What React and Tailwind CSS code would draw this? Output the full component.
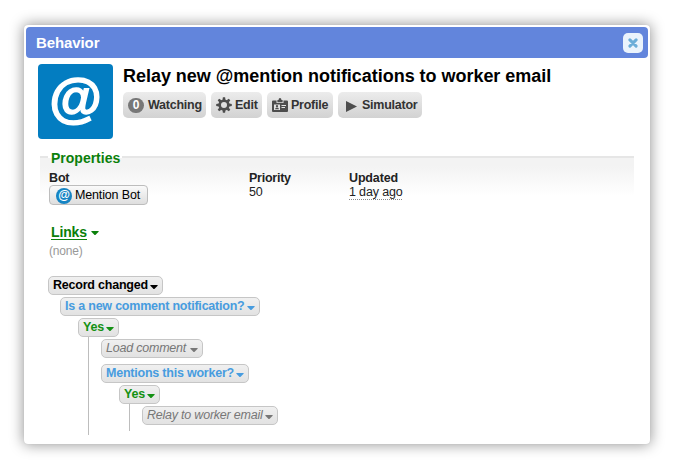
import React from "react";

function AtSign({ className, glyph = "" }) {
  return (
    <span className={`flex items-center justify-center text-white ${className}`}>
      <span className={glyph}>@</span>
    </span>
  );
}

function Caret() {
  return (
    <svg className="mt-[2px] h-[4px] w-[8px] shrink-0" viewBox="0 0 8 4" fill="currentColor">
      <path d="M0.4 0H7.6V0.7L4.4 4H3.6L0.4 0.7Z" />
    </svg>
  );
}

function GearIcon() {
  return (
    <svg className="h-4 w-4" viewBox="0 0 16 16">
      <g fill="#4d4d4d">
        {[0, 45, 90, 135, 180, 225, 270, 315].map((a) => (
          <path key={a} d="M6.9 0.2H9.1L9.7 4H6.3Z" transform={`rotate(${a} 8 8)`} />
        ))}
      </g>
      <circle cx="8" cy="8" r="4.3" fill="none" stroke="#4d4d4d" strokeWidth="2.6" />
    </svg>
  );
}

function BadgeIcon() {
  return (
    <svg className="h-[14px] w-4" viewBox="0 0 16 14">
      <path d="M1 2.5H4.5V5H11.5V2.5H15Q16 2.5 16 3.5V13Q16 14 15 14H1Q0 14 0 13V3.5Q0 2.5 1 2.5Z" fill="#4d4d4d" />
      <path d="M5.4 4.2V2H6.5Q6.7 0 8 0Q9.3 0 9.5 2H10.6V4.2Z" fill="#4d4d4d" />
      <path d="M2 6.5H8V12H2Z M9.5 7H14V8H9.5Z M9.5 9H13V10H9.5Z" fill="#e2e2e2" />
      <circle cx="5" cy="8.2" r="1.1" fill="#4d4d4d" />
      <path d="M3 11.3Q3.2 9.5 5 9.5Q6.8 9.5 7 11.3Z" fill="#4d4d4d" />
    </svg>
  );
}

function ToolButton({ icon, label, className }) {
  return (
    <div className={`flex h-[26px] items-center rounded-[5px] bg-gradient-to-b from-[#ececec] to-[#d2d2d2] text-[12.5px] leading-[26px] font-bold tracking-[-0.25px] text-[#333] ${className}`}>
      <span className="flex shrink-0">{icon}</span>
      <span className="whitespace-nowrap">{label}</span>
    </div>
  );
}

function Node({ label, className }) {
  return (
    <div className={`flex h-[19px] items-center justify-between rounded-[5px] border border-[#c6c6c6] bg-gradient-to-b from-[#f0f0f0] to-[#e2e2e2] pr-[4px] pl-[4px] text-[12.5px] leading-[17px] tracking-[-0.22px] whitespace-nowrap ${className}`}>
      <span>{label}</span>
      <Caret />
    </div>
  );
}

export default function App() {
  return (
    <div className="h-[471px] w-[676px] overflow-hidden bg-white px-[24px] pt-[25px] font-['Liberation_Sans',Arial,sans-serif] text-[12.5px] tracking-[-0.15px] text-[#222]">
      <div className="h-[419px] w-[626px] rounded-[4px] bg-white px-[2px] pt-[2px] shadow-[0_0_1px_0_#bbb,0_0_14px_1px_#9a9a9a]">
        <header className="flex h-[31px] items-center justify-between rounded-[4px] bg-[#6285dc] pr-[5px] pl-[10px]">
          <h1 className="pt-[2px] text-[15px] font-bold tracking-[-0.1px] text-white">Behavior</h1>
          <button className="flex h-5 w-5 items-center justify-center rounded-[5px] bg-[#eaf3fc]">
            <svg className="mt-px h-[10px] w-[10px]" viewBox="0 0 10 10">
              <path d="M1.9 1.9L8.1 8.1M8.1 1.9L1.9 8.1" stroke="#6badd8" strokeWidth="3" strokeLinecap="round" />
            </svg>
          </button>
        </header>

        <section className="flex pt-[6px] pl-[12px]">
          <AtSign className="h-[75px] w-[75px] rounded-[4px] bg-[#037dc1] pb-[9px] text-[54px] leading-none font-bold" glyph="[-webkit-text-stroke:1.4px_white]" />
          <div className="pl-[10px]">
            <h2 className="h-[28px] pt-px text-[18px] leading-[22px] font-bold tracking-[-0.03px] whitespace-nowrap text-black">
              Relay new @mention notifications to worker email
            </h2>
            <div className="flex gap-[5px]">
              <ToolButton
                className="w-[83px] gap-[4px] pl-[5px]"
                icon={<span className="flex h-[15px] w-4 items-center justify-center rounded-full bg-[#777] text-[12px] leading-none text-white">0</span>}
                label="Watching"
              />
              <ToolButton className="w-[51px] gap-[3px] pl-[5px]" icon={<GearIcon />} label="Edit" />
              <ToolButton className="w-[66px] gap-[3px] pl-[5px]" icon={<BadgeIcon />} label="Profile" />
              <ToolButton
                className="w-[84px] gap-[5px] pl-[8px]"
                icon={<svg className="mt-[2px] h-[11px] w-[11px]" viewBox="0 0 11 11"><path d="M0 0L11 5.5L0 11Z" fill="#4d4d4d" /></svg>}
                label="Simulator"
              />
            </div>
          </div>
        </section>

        <section className="mt-[11px] ml-[14px] h-[68px] w-[594px]">
          <div className="flex h-[16px] items-start">
            <div className="h-[16px] w-[8px] pt-[6px]"><div className="h-[10px] border-t-2 border-[#e6e6e6] bg-[#f3f3f3]" /></div>
            <h3 className="h-[16px] w-[74px] bg-gradient-to-b from-white from-50% to-[#f3f3f3] to-50% pl-[3px] text-[14px] leading-[16px] font-bold tracking-[0px] whitespace-nowrap text-[#0b800b]">Properties</h3>
            <div className="h-[16px] flex-1 pt-[6px]"><div className="h-[10px] border-t-2 border-[#e6e6e6] bg-[#f3f3f3]" /></div>
          </div>
          <div className="flex bg-gradient-to-b from-[#f3f3f3] to-white to-[30px] pt-[5px] pl-[9px] leading-[14px]">
            <div className="w-[200px]">
              <div className="font-bold">Bot</div>
              <div className="flex h-5 w-[99px] items-center gap-[3px] rounded-[4px] border border-[#bdbdbd] bg-gradient-to-b from-[#fafafa] to-[#dedede] pl-[6px] text-black">
                <AtSign className="mt-px h-4 w-4 shrink-0 rounded-full bg-[#1684c3] pb-px text-[12px] leading-none font-bold" />
                <span className="whitespace-nowrap">Mention Bot</span>
              </div>
            </div>
            <div className="w-[100px]">
              <div className="font-bold tracking-[-0.25px]">Priority</div>
              <div>50</div>
            </div>
            <div>
              <div className="font-bold">Updated</div>
              <div className="w-[53px] border-b border-dotted border-[#888] whitespace-nowrap">1 day ago</div>
            </div>
          </div>
        </section>

        <section className="h-[57px] pt-[6px] pl-[23px]">
          <h3 className="flex items-center gap-[4px] pl-[2px] text-[14px] leading-[17px] font-bold text-[#0b800b]">
            <span className="h-[16px] border-b border-current leading-[16px]">Links</span>
            <Caret />
          </h3>
          <p className="pt-[4px] text-[12px] leading-[15px] tracking-[-0.2px] text-[#999]">(none)</p>
        </section>

        <section className="pt-px pl-[22px]">
          <Node className="w-[115px] font-bold text-black" label="Record changed" />
          <div className="pt-[2px] pl-[12px]">
            <Node className="w-[200px] font-bold text-[#479cdf]" label="Is a new comment notification?" />
            <div className="pt-[2px] pl-[18px]">
              <Node className="w-[41px] font-bold text-[#149114]" label="Yes" />
              <div className="ml-[10px] h-[98px] border-l border-[#bdbdbd] pt-[2px] pl-[12px]">
                <Node className="w-[102px] text-[#777] italic" label="Load comment" />
                <Node className="mt-[6px] w-[148px] font-bold text-[#479cdf]" label="Mentions this worker?" />
                <div className="pt-[2px] pl-[18px]">
                  <Node className="w-[41px] font-bold text-[#149114]" label="Yes" />
                  <div className="ml-[10px] h-[27px] border-l border-[#bdbdbd] pt-[2px] pl-[12px]">
                    <Node className="w-[136px] text-[#777] italic" label="Relay to worker email" />
                  </div>
                </div>
              </div>
            </div>
          </div>
        </section>
      </div>
    </div>
  );
}
